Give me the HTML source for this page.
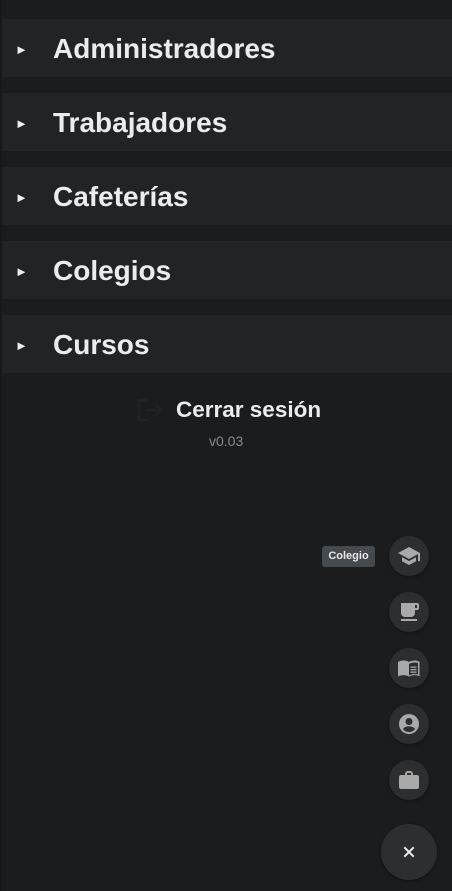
<!DOCTYPE html><html><head><style>
body{margin:0;width:452px;height:891px;background:#1b1c1e;font-family:"Liberation Sans",sans-serif;position:relative;overflow:hidden}
.edge{position:absolute;left:0;top:0;width:2px;height:891px;background:#16181d}
.row{position:absolute;left:2px;right:0;height:58px;background:#222325;color:#ececec;font-weight:bold;font-size:28px;line-height:58px}
.row .t{position:absolute;left:51px;top:1px}
.row .a{position:absolute;left:13px;top:2px;font-size:13px;color:#eee}
.fab{position:absolute;width:40px;height:40px;border-radius:50%;background:#2c2e30;left:389px;box-shadow:0 1px 3px rgba(0,0,0,.4)}
.fab svg{position:absolute;left:8px;top:8px;width:24px;height:24px;fill:#a9a9a9}
</style></head><body>
<div class="edge"></div>
<div class="row" style="top:19px"><span class="a">►</span><span class="t">Administradores</span></div>
<div class="row" style="top:93px"><span class="a">►</span><span class="t">Trabajadores</span></div>
<div class="row" style="top:167px"><span class="a">►</span><span class="t">Cafeterías</span></div>
<div class="row" style="top:241px"><span class="a">►</span><span class="t">Colegios</span></div>
<div class="row" style="top:315px"><span class="a">►</span><span class="t">Cursos</span></div>
<svg style="position:absolute;left:137px;top:398px" width="26" height="24" viewBox="0 0 26 24" fill="none" stroke="#212224" stroke-width="2"><path d="M12 2H2v20h10M9 12h15M19 7l5 5-5 5"/></svg>
<div style="position:absolute;left:176px;top:397px;color:#ececec;font-weight:bold;font-size:22.5px">Cerrar sesión</div>
<div style="position:absolute;left:209px;top:433px;color:#8a8a8a;font-size:14px">v0.03</div>
<div style="position:absolute;left:322px;top:546px;width:53px;height:21px;border-radius:3px;background:#454a4f;color:#e8e8e8;font-size:11px;font-weight:bold;line-height:21px;text-align:center">Colegio</div>
<div class="fab" style="top:536px"><svg viewBox="0 0 24 24"><path d="M5 13.2v4L12 21l7-3.8v-4L12 17l-7-3.8zM12 3L1 9l11 6 9-4.9V17h2V9L12 3z"/></svg></div>
<div class="fab" style="top:592px"><svg viewBox="0 0 24 24"><path d="M4 19h16v2H4zM20 3H4v10a4 4 0 004 4h6a4 4 0 004-4v-3h2a2 2 0 002-2V5a2 2 0 00-2-2zm0 5h-2V5h2v3z"/></svg></div>
<div class="fab" style="top:648px"><svg viewBox="0 0 24 24"><path d="M21 5c-1.1-.35-2.3-.5-3.5-.5-1.95 0-4.05.4-5.5 1.5-1.45-1.1-3.55-1.5-5.5-1.5S2.45 4.9 1 6v14.65c1.45-1.1 3.550-1.5 5.5-1.5s4.05.4 5.5 1.5c1.35-.85 3.8-1.5 5.5-1.5 1.65 0 3.35.3 4.75 1.05.1.05.25.05.25.05V6c-.6-.45-1.25-.75-2-1zm0 13.5c-1.1-.35-2.3-.5-3.5-.5-1.7 0-4.150.65-5.5 1.5V8c1.35-.85 3.8-1.5 5.5-1.5 1.2 0 2.4.15 3.5.5v11.5zM13.5 10.5h6v1.3h-6zm0 2.5h6v1.3h-6zm0 2.5h6v1.3h-6z"/></svg></div>
<div class="fab" style="top:704px"><svg viewBox="0 0 24 24"><path d="M12 2a10 10 0 100 20 10 10 0 000-20zm0 4a3.5 3.5 0 110 7 3.5 3.5 0 010-7zm0 14a8 8 0 01-6-2.8c.5-1.8 3.4-2.8 6-2.8s5.5 1 6 2.8A8 8 0 0112 20z"/></svg></div>
<div class="fab" style="top:760px"><svg viewBox="0 0 24 24"><path d="M20 7h-4V5l-2-2h-4L8 5v2H4c-1.1 0-2 .9-2 2v10c0 1.1.9 2 2 2h16c1.1 0 2-.9 2-2V9c0-1.1-.9-2-2-2zm-6 0h-4V5h4v2z"/></svg></div>
<div class="fab" style="top:824px;left:381px;width:56px;height:56px"><svg style="left:20px;top:20px;width:16px;height:16px" viewBox="0 0 24 24" fill="none" stroke="#eee" stroke-width="3"><path d="M5 5l14 14M19 5L5 19"/></svg></div>
</body></html>
